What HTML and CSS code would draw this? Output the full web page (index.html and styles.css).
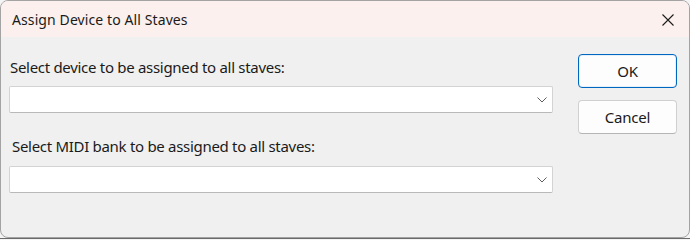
FILE: index.html
```html
<!DOCTYPE html>
<html lang="en">
<head>
<meta charset="utf-8">
<title>Assign Device to All Staves</title>
<link rel="stylesheet" href="styles.css">
</head>
<body>
<div class="window">
  <div class="titlebar">
    <span class="title">Assign Device to All Staves</span>
    <span class="close" aria-label="Close">
      <svg width="12" height="12" viewBox="0 0 12 12"><path d="M0.5 0.5 L11.5 11.5 M11.5 0.5 L0.5 11.5" stroke="#1c1c1c" stroke-width="1.1" fill="none"/></svg>
    </span>
  </div>
  <div class="content">
    <div class="fields">
      <div class="label">Select device to be assigned to all staves:</div>
      <div class="combo">
        <svg class="chev" width="10" height="6" viewBox="0 0 10 6"><path d="M0.5 0.5 L5 5 L9.5 0.5" stroke="#5f5f5f" stroke-width="1" fill="none"/></svg>
      </div>
      <div class="label label2">Select MIDI bank to be assigned to all staves:</div>
      <div class="combo">
        <svg class="chev" width="10" height="6" viewBox="0 0 10 6"><path d="M0.5 0.5 L5 5 L9.5 0.5" stroke="#5f5f5f" stroke-width="1" fill="none"/></svg>
      </div>
    </div>
    <div class="buttons">
      <div class="btn btn-default">OK</div>
      <div class="btn">Cancel</div>
    </div>
  </div>
</div>
<div class="under"></div>
</body>
</html>
```
FILE: styles.css
```css
html, body {
  margin: 0;
  padding: 0;
}
body {
  width: 690px;
  height: 239px;
  background: #f4f4f4;
  font-family: "Noto Sans", "Open Sans", sans-serif;
  color: #1a1a1a;
  overflow: hidden;
}
.window {
  box-sizing: border-box;
  width: 690px;
  height: 238px;
  border: 1px solid #a3a3a3;
  border-radius: 8px;
  background: #f0f0f0;
  overflow: hidden;
}
.titlebar {
  height: 36px;
  background: #fbf0ee;
  display: flex;
  align-items: center;
  justify-content: space-between;
  padding-left: 11px;
  padding-right: 15px;
}
.title {
  font-size: 14px;
  line-height: 20px;
  margin-top: 2px;
  letter-spacing: 0.1px;
}
.close {
  display: flex;
  width: 12px;
  height: 12px;
  margin-top: 2px;
}
.content {
  display: flex;
  padding-left: 8px;
}
.fields {
  width: 544px;
  padding-top: 20px;
}
.label {
  font-size: 15px;
  line-height: 20px;
  letter-spacing: -0.3px;
  padding-left: 1px;
  margin-bottom: 9px;
}
.label2 {
  padding-left: 3px;
  margin-top: 23px;
  margin-bottom: 10px;
}
.combo {
  box-sizing: border-box;
  height: 27px;
  background: #ffffff;
  border: 1px solid #d3d3d3;
  border-bottom-color: #b9b9b9;
  border-radius: 2px;
  display: flex;
  align-items: center;
  justify-content: flex-end;
  padding-right: 5px;
}
.chev {
  display: block;
  margin-top: 1px;
}
.buttons {
  margin-left: 25px;
  padding-top: 17px;
  display: flex;
  flex-direction: column;
  gap: 12px;
}
.btn {
  box-sizing: border-box;
  width: 99px;
  height: 34px;
  background: #fdfdfd;
  border: 1px solid #d0d0d0;
  border-bottom-color: #b5b5b5;
  border-radius: 4px;
  display: flex;
  align-items: center;
  justify-content: center;
  font-size: 15px;
  letter-spacing: -0.2px;
}
.btn-default {
  border: 1px solid #0067c0;
  box-shadow: inset 0 0 0 1px #e6f0fa;
}
.under {
  height: 1px;
  background: #6a6a6a;
}
```
